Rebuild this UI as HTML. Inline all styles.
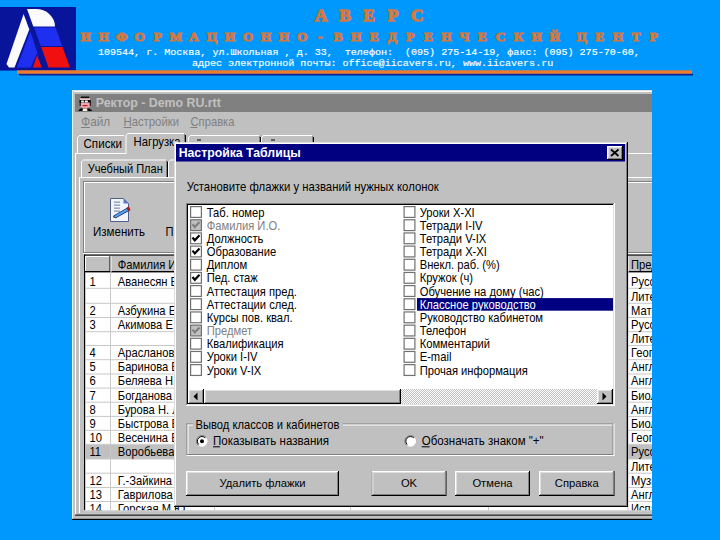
<!DOCTYPE html>
<html><head><meta charset="utf-8"><style>
html,body{margin:0;padding:0;background:#0098fc;}
svg{display:block;font-family:"Liberation Sans",sans-serif;}
</style></head><body>
<svg width="720" height="540" viewBox="0 0 720 540">
<defs><clipPath id="gridclip"><rect x="84" y="254" width="568" height="256.5"/></clipPath><pattern id="dither" width="2" height="2" patternUnits="userSpaceOnUse"><rect width="1" height="1" fill="#fff"/><rect x="1" y="1" width="1" height="1" fill="#fff"/><rect x="1" width="1" height="1" fill="#c0c0c0"/><rect y="1" width="1" height="1" fill="#c0c0c0"/></pattern></defs>
<rect x="0" y="0" width="720" height="540" fill="#0098fc" />
<rect x="0" y="7" width="76" height="63.6" fill="#08149a" />
<path d="M27,9 L36,9 A19,17.5 0 0 1 55,26.5 L33.3,26.5 Z" fill="#fbfbfb" />
<polygon points="34.1,27.6 55.6,27.6 62.2,46 40.7,46" fill="#1f2ff0" />
<polygon points="41.2,47 62.5,47 70,67.6 48.5,67.6" fill="#f01010" />
<polygon points="23.6,14 29.3,29.5 14.5,67.5 9,67.5 6.5,64" fill="#fbfbfb" />
<polygon points="30.3,31.5 33.2,39.5 41.8,67.6 16.8,67.6" fill="#1f2ff0" />
<polygon points="37,53.5 30.8,67.6 43,67.6" fill="#08149a" />
<polygon points="37,55.5 32.8,67.6 41.8,67.6" fill="#f01010" />
<rect x="19" y="73.5" width="674" height="2" fill="#10208a" />
<rect x="17" y="70.3" width="675" height="3.4" fill="#f07a2a" />
<text x="321.01" y="21.2" font-family="Liberation Serif" font-weight="bold" font-size="17.5" fill="#e47a3c" text-anchor="middle" stroke="#cf7844" stroke-width="1.3">А</text>
<text x="345.05" y="21.2" font-family="Liberation Serif" font-weight="bold" font-size="17.5" fill="#e47a3c" text-anchor="middle" stroke="#cf7844" stroke-width="1.3">В</text>
<text x="369.09" y="21.2" font-family="Liberation Serif" font-weight="bold" font-size="17.5" fill="#e47a3c" text-anchor="middle" stroke="#cf7844" stroke-width="1.3">Е</text>
<text x="393.13" y="21.2" font-family="Liberation Serif" font-weight="bold" font-size="17.5" fill="#e47a3c" text-anchor="middle" stroke="#cf7844" stroke-width="1.3">Р</text>
<text x="417.17" y="21.2" font-family="Liberation Serif" font-weight="bold" font-size="17.5" fill="#e47a3c" text-anchor="middle" stroke="#cf7844" stroke-width="1.3">С</text>
<text x="85.51" y="41.2" font-family="Liberation Serif" font-weight="bold" font-size="13.2" fill="#e47a3c" text-anchor="middle" stroke="#cf7844" stroke-width="1.15">И</text>
<text x="103.55" y="41.2" font-family="Liberation Serif" font-weight="bold" font-size="13.2" fill="#e47a3c" text-anchor="middle" stroke="#cf7844" stroke-width="1.15">Н</text>
<text x="121.60" y="41.2" font-family="Liberation Serif" font-weight="bold" font-size="13.2" fill="#e47a3c" text-anchor="middle" stroke="#cf7844" stroke-width="1.15">Ф</text>
<text x="139.64" y="41.2" font-family="Liberation Serif" font-weight="bold" font-size="13.2" fill="#e47a3c" text-anchor="middle" stroke="#cf7844" stroke-width="1.15">О</text>
<text x="157.69" y="41.2" font-family="Liberation Serif" font-weight="bold" font-size="13.2" fill="#e47a3c" text-anchor="middle" stroke="#cf7844" stroke-width="1.15">Р</text>
<text x="175.73" y="41.2" font-family="Liberation Serif" font-weight="bold" font-size="13.2" fill="#e47a3c" text-anchor="middle" stroke="#cf7844" stroke-width="1.15">М</text>
<text x="193.78" y="41.2" font-family="Liberation Serif" font-weight="bold" font-size="13.2" fill="#e47a3c" text-anchor="middle" stroke="#cf7844" stroke-width="1.15">А</text>
<text x="211.82" y="41.2" font-family="Liberation Serif" font-weight="bold" font-size="13.2" fill="#e47a3c" text-anchor="middle" stroke="#cf7844" stroke-width="1.15">Ц</text>
<text x="229.86" y="41.2" font-family="Liberation Serif" font-weight="bold" font-size="13.2" fill="#e47a3c" text-anchor="middle" stroke="#cf7844" stroke-width="1.15">И</text>
<text x="247.91" y="41.2" font-family="Liberation Serif" font-weight="bold" font-size="13.2" fill="#e47a3c" text-anchor="middle" stroke="#cf7844" stroke-width="1.15">О</text>
<text x="265.95" y="41.2" font-family="Liberation Serif" font-weight="bold" font-size="13.2" fill="#e47a3c" text-anchor="middle" stroke="#cf7844" stroke-width="1.15">Н</text>
<text x="284.00" y="41.2" font-family="Liberation Serif" font-weight="bold" font-size="13.2" fill="#e47a3c" text-anchor="middle" stroke="#cf7844" stroke-width="1.15">Н</text>
<text x="302.04" y="41.2" font-family="Liberation Serif" font-weight="bold" font-size="13.2" fill="#e47a3c" text-anchor="middle" stroke="#cf7844" stroke-width="1.15">О</text>
<text x="320.08" y="41.2" font-family="Liberation Serif" font-weight="bold" font-size="13.2" fill="#e47a3c" text-anchor="middle" stroke="#cf7844" stroke-width="1.15">-</text>
<text x="338.13" y="41.2" font-family="Liberation Serif" font-weight="bold" font-size="13.2" fill="#e47a3c" text-anchor="middle" stroke="#cf7844" stroke-width="1.15">В</text>
<text x="356.17" y="41.2" font-family="Liberation Serif" font-weight="bold" font-size="13.2" fill="#e47a3c" text-anchor="middle" stroke="#cf7844" stroke-width="1.15">Н</text>
<text x="374.22" y="41.2" font-family="Liberation Serif" font-weight="bold" font-size="13.2" fill="#e47a3c" text-anchor="middle" stroke="#cf7844" stroke-width="1.15">Е</text>
<text x="392.26" y="41.2" font-family="Liberation Serif" font-weight="bold" font-size="13.2" fill="#e47a3c" text-anchor="middle" stroke="#cf7844" stroke-width="1.15">Д</text>
<text x="410.30" y="41.2" font-family="Liberation Serif" font-weight="bold" font-size="13.2" fill="#e47a3c" text-anchor="middle" stroke="#cf7844" stroke-width="1.15">Р</text>
<text x="428.35" y="41.2" font-family="Liberation Serif" font-weight="bold" font-size="13.2" fill="#e47a3c" text-anchor="middle" stroke="#cf7844" stroke-width="1.15">Е</text>
<text x="446.39" y="41.2" font-family="Liberation Serif" font-weight="bold" font-size="13.2" fill="#e47a3c" text-anchor="middle" stroke="#cf7844" stroke-width="1.15">Н</text>
<text x="464.44" y="41.2" font-family="Liberation Serif" font-weight="bold" font-size="13.2" fill="#e47a3c" text-anchor="middle" stroke="#cf7844" stroke-width="1.15">Ч</text>
<text x="482.48" y="41.2" font-family="Liberation Serif" font-weight="bold" font-size="13.2" fill="#e47a3c" text-anchor="middle" stroke="#cf7844" stroke-width="1.15">Е</text>
<text x="500.52" y="41.2" font-family="Liberation Serif" font-weight="bold" font-size="13.2" fill="#e47a3c" text-anchor="middle" stroke="#cf7844" stroke-width="1.15">С</text>
<text x="518.57" y="41.2" font-family="Liberation Serif" font-weight="bold" font-size="13.2" fill="#e47a3c" text-anchor="middle" stroke="#cf7844" stroke-width="1.15">К</text>
<text x="536.61" y="41.2" font-family="Liberation Serif" font-weight="bold" font-size="13.2" fill="#e47a3c" text-anchor="middle" stroke="#cf7844" stroke-width="1.15">И</text>
<text x="554.65" y="41.2" font-family="Liberation Serif" font-weight="bold" font-size="13.2" fill="#e47a3c" text-anchor="middle" stroke="#cf7844" stroke-width="1.15">Й</text>
<text x="581.72" y="41.2" font-family="Liberation Serif" font-weight="bold" font-size="13.2" fill="#e47a3c" text-anchor="middle" stroke="#cf7844" stroke-width="1.15">Ц</text>
<text x="599.76" y="41.2" font-family="Liberation Serif" font-weight="bold" font-size="13.2" fill="#e47a3c" text-anchor="middle" stroke="#cf7844" stroke-width="1.15">Е</text>
<text x="617.81" y="41.2" font-family="Liberation Serif" font-weight="bold" font-size="13.2" fill="#e47a3c" text-anchor="middle" stroke="#cf7844" stroke-width="1.15">Н</text>
<text x="635.85" y="41.2" font-family="Liberation Serif" font-weight="bold" font-size="13.2" fill="#e47a3c" text-anchor="middle" stroke="#cf7844" stroke-width="1.15">Т</text>
<text x="653.90" y="41.2" font-family="Liberation Serif" font-weight="bold" font-size="13.2" fill="#e47a3c" text-anchor="middle" stroke="#cf7844" stroke-width="1.15">Р</text>
<text x="98" y="54.5" font-size="9.4" fill="#ffffff" font-family="Liberation Mono" textLength="541.8" lengthAdjust="spacingAndGlyphs" stroke="#ffffff" stroke-width="0.15" style="white-space:pre">109544, г. Москва, ул.Школьная , д. 33,  телефон:  (095) 275-14-19, факс: (095) 275-70-60,</text>
<text x="192" y="66.3" font-size="9.4" fill="#ffffff" font-family="Liberation Mono" textLength="361.2" lengthAdjust="spacingAndGlyphs" stroke="#ffffff" stroke-width="0.15" style="white-space:pre">адрес электронной почты: office@iicavers.ru, www.iicavers.ru</text>
<rect x="72" y="90" width="580" height="430" fill="#c0c0c0" />
<rect x="72" y="90" width="580" height="1" fill="#dfdfdf" />
<rect x="72" y="90" width="1" height="430" fill="#e6f4f8" />
<rect x="73" y="91" width="579" height="1" fill="#ffffff" />
<rect x="73" y="91" width="1" height="428" fill="#c0c0c0" />
<rect x="75" y="94" width="577" height="18" fill="#808080" />
<text x="95.8" y="100.187" transform="scale(1,1.07)" font-size="12.2" fill="#c0c0c0" font-weight="bold" textLength="125" lengthAdjust="spacingAndGlyphs"  style="white-space:pre">Ректор - Demo RU.rtt</text>
<rect x="81" y="96.5" width="8" height="2" fill="#101010" />
<rect x="80" y="97.5" width="10" height="3" fill="#e8c8c8" />
<rect x="80.5" y="97" width="9" height="1.2" fill="#101010" />
<rect x="79.5" y="100" width="11" height="2.6" fill="#000" />
<rect x="81.2" y="100.5" width="2.6" height="1.8" fill="#ffffff" />
<rect x="84.8" y="100.5" width="3" height="1.8" fill="#ffffff" />
<rect x="80.5" y="102.6" width="9.5" height="4.6" fill="#f0a8b4" />
<rect x="79.7" y="101" width="1" height="5" fill="#000" />
<rect x="89.7" y="101" width="1" height="5" fill="#000" />
<rect x="82.5" y="105" width="5" height="1.2" fill="#d01818" />
<rect x="82" y="107.2" width="6" height="1.2" fill="#f0a8b4" />
<polygon points="78,111 80.5,108.4 89.5,108.4 92.5,111" fill="#000" />
<polygon points="82.5,111 83,108.4 87,108.4 87.5,111" fill="#f8f0d8" />
<text x="81.2" y="117.570" transform="scale(1,1.07)" font-size="11.4" fill="#808080" textLength="29" lengthAdjust="spacingAndGlyphs"  style="white-space:pre">Файл</text>
<text x="123.5" y="117.570" transform="scale(1,1.07)" font-size="11.4" fill="#808080" textLength="55.5" lengthAdjust="spacingAndGlyphs"  style="white-space:pre">Настройки</text>
<text x="190.5" y="117.570" transform="scale(1,1.07)" font-size="11.4" fill="#808080" textLength="44" lengthAdjust="spacingAndGlyphs"  style="white-space:pre">Справка</text>
<rect x="81" y="127" width="9" height="1" fill="#808080" />
<rect x="123.5" y="127" width="8" height="1" fill="#808080" />
<rect x="190.5" y="127" width="7" height="1" fill="#808080" />
<rect x="75" y="153" width="577" height="1" fill="#ffffff" />
<rect x="75" y="153" width="1" height="363" fill="#ffffff" />
<rect x="77" y="137" width="1" height="16" fill="#fff" />
<rect x="79" y="135" width="45" height="1" fill="#fff" />
<rect x="78" y="136" width="1" height="1" fill="#fff" />
<rect x="125.5" y="133" width="60.5" height="21" fill="#c0c0c0" />
<rect x="125.5" y="135" width="1" height="19" fill="#fff" />
<rect x="127.5" y="133" width="56.5" height="1" fill="#fff" />
<rect x="126.5" y="134" width="1" height="1" fill="#fff" />
<rect x="185.0" y="135" width="1" height="19" fill="#000" />
<rect x="184.0" y="134" width="1" height="20" fill="#808080" />
<text x="83.5" y="138.598" transform="scale(1,1.07)" font-size="11.5" fill="#000" textLength="38.5" lengthAdjust="spacingAndGlyphs"  style="white-space:pre">Списки</text>
<text x="133.6" y="136.822" transform="scale(1,1.07)" font-size="11.5" fill="#000" textLength="47" lengthAdjust="spacingAndGlyphs"  style="white-space:pre">Нагрузка</text>
<rect x="188" y="137" width="1" height="16" fill="#fff" />
<rect x="190" y="135" width="69" height="1" fill="#fff" />
<rect x="189" y="136" width="1" height="1" fill="#fff" />
<rect x="260" y="137" width="1" height="16" fill="#000" />
<rect x="259" y="136" width="1" height="17" fill="#808080" />
<rect x="261" y="137" width="1" height="16" fill="#fff" />
<rect x="263" y="135" width="49" height="1" fill="#fff" />
<rect x="262" y="136" width="1" height="1" fill="#fff" />
<rect x="313" y="137" width="1" height="16" fill="#000" />
<rect x="312" y="136" width="1" height="17" fill="#808080" />
<rect x="197" y="139.5" width="4" height="1" fill="#000" />
<rect x="271" y="139.5" width="4" height="1" fill="#000" />
<rect x="79" y="177" width="573" height="1" fill="#ffffff" />
<rect x="79" y="177" width="1" height="336" fill="#ffffff" />
<rect x="81" y="161.5" width="1" height="15.5" fill="#fff" />
<rect x="83" y="159.5" width="83" height="1" fill="#fff" />
<rect x="82" y="160.5" width="1" height="1" fill="#fff" />
<rect x="167" y="161.5" width="1" height="15.5" fill="#000" />
<rect x="166" y="160.5" width="1" height="16.5" fill="#808080" />
<text x="87.8" y="161.495" transform="scale(1,1.07)" font-size="11.2" fill="#000" textLength="75" lengthAdjust="spacingAndGlyphs"  style="white-space:pre">Учебный План</text>
<rect x="168" y="161.5" width="1" height="15.5" fill="#fff" />
<rect x="170" y="159.5" width="36" height="1" fill="#fff" />
<rect x="169" y="160.5" width="1" height="1" fill="#fff" />
<rect x="207" y="161.5" width="1" height="15.5" fill="#000" />
<rect x="206" y="160.5" width="1" height="16.5" fill="#808080" />
<rect x="83" y="181" width="569" height="1" fill="#808080" />
<rect x="83" y="182" width="569" height="1" fill="#ffffff" />
<rect x="83" y="181" width="1" height="72" fill="#808080" />
<rect x="84" y="182" width="1" height="71" fill="#ffffff" />
<rect x="83" y="252" width="569" height="1" fill="#808080" />
<rect x="83" y="253" width="569" height="1" fill="#ffffff" />
<text x="93" y="221.028" transform="scale(1,1.07)" font-size="11.2" fill="#000" textLength="52" lengthAdjust="spacingAndGlyphs"  style="white-space:pre">Изменить</text>
<text x="165.5" y="221.028" transform="scale(1,1.07)" font-size="11.2" fill="#000"  style="white-space:pre">П</text>
<polygon points="110.5,198.5 123.5,198.5 128.5,203.5 128.5,221.5 110.5,221.5" fill="#f0f4ff" stroke="#50608a" stroke-width="1"/>
<polygon points="123.5,198.5 123.5,203.5 128.5,203.5" fill="#5a7ad0" />
<rect x="114.0" y="201.5" width="6" height="1.3" fill="#8898b8" />
<rect x="114.0" y="204.5" width="6" height="1.3" fill="#8898b8" />
<rect x="114.0" y="207.5" width="6" height="1.3" fill="#8898b8" />
<rect x="114.0" y="210.5" width="6" height="1.3" fill="#8898b8" />
<polygon points="113.5,216.0 127.0,208.3 128.7,210.7 115.3,218.0" fill="#58a8f0" stroke="#1a2a70" stroke-width="0.9"/>
<polygon points="113.1,216.1 115.1,217.9 113.7,217.7" fill="#202020" />
<polygon points="126.5,207.5 129.0,206.5 130.5,210.0 128.5,211.5" fill="#b01818" />
<g clip-path="url(#gridclip)">
<rect x="84" y="254.5" width="568" height="256" fill="#ffffff" />
<rect x="84" y="254.5" width="568" height="1.2" fill="#000" />
<rect x="84" y="254.5" width="1.2" height="256" fill="#000" />
<rect x="85" y="256" width="567" height="16" fill="#c0c0c0" />
<rect x="85" y="256" width="25" height="1" fill="#fff" />
<rect x="85" y="256" width="1" height="16" fill="#fff" />
<rect x="109.5" y="256" width="1" height="16" fill="#000" />
<rect x="85" y="271" width="567" height="1.4" fill="#000" />
<rect x="110.5" y="256" width="1" height="16" fill="#fff" />
<text x="117.8" y="251.589" transform="scale(1,1.07)" font-size="11.2" fill="#000"  style="white-space:pre">Фамилия И.О.</text>
<rect x="85" y="287.8" width="567" height="1" fill="#c8c8c8" />
<text x="89.5" y="267.009" transform="scale(1,1.07)" font-size="11.2" fill="#000"  style="white-space:pre">1</text>
<text x="117.8" y="267.009" transform="scale(1,1.07)" font-size="11.2" fill="#000"  style="white-space:pre">Аванесян В.</text>
<text x="631" y="267.009" transform="scale(1,1.07)" font-size="11.2" fill="#000"  style="white-space:pre">Русский</text>
<rect x="85" y="302.8" width="567" height="1" fill="#c8c8c8" />
<text x="631" y="281.028" transform="scale(1,1.07)" font-size="11.2" fill="#000"  style="white-space:pre">Литература</text>
<rect x="85" y="317.0" width="567" height="1" fill="#c8c8c8" />
<text x="89.5" y="294.299" transform="scale(1,1.07)" font-size="11.2" fill="#000"  style="white-space:pre">2</text>
<text x="117.8" y="294.299" transform="scale(1,1.07)" font-size="11.2" fill="#000"  style="white-space:pre">Азбукина Е.</text>
<text x="631" y="294.299" transform="scale(1,1.07)" font-size="11.2" fill="#000"  style="white-space:pre">Математика</text>
<rect x="85" y="331.2" width="567" height="1" fill="#c8c8c8" />
<text x="89.5" y="307.570" transform="scale(1,1.07)" font-size="11.2" fill="#000"  style="white-space:pre">3</text>
<text x="117.8" y="307.570" transform="scale(1,1.07)" font-size="11.2" fill="#000"  style="white-space:pre">Акимова Е.</text>
<text x="631" y="307.570" transform="scale(1,1.07)" font-size="11.2" fill="#000"  style="white-space:pre">Русский</text>
<rect x="85" y="345.0" width="567" height="1" fill="#c8c8c8" />
<text x="631" y="320.467" transform="scale(1,1.07)" font-size="11.2" fill="#000"  style="white-space:pre">Литература</text>
<rect x="85" y="359.2" width="567" height="1" fill="#c8c8c8" />
<text x="89.5" y="333.738" transform="scale(1,1.07)" font-size="11.2" fill="#000"  style="white-space:pre">4</text>
<text x="117.8" y="333.738" transform="scale(1,1.07)" font-size="11.2" fill="#000"  style="white-space:pre">Арасланов И.</text>
<text x="631" y="333.738" transform="scale(1,1.07)" font-size="11.2" fill="#000"  style="white-space:pre">География</text>
<rect x="85" y="373.5" width="567" height="1" fill="#c8c8c8" />
<text x="89.5" y="347.103" transform="scale(1,1.07)" font-size="11.2" fill="#000"  style="white-space:pre">5</text>
<text x="117.8" y="347.103" transform="scale(1,1.07)" font-size="11.2" fill="#000"  style="white-space:pre">Баринова В.</text>
<text x="631" y="347.103" transform="scale(1,1.07)" font-size="11.2" fill="#000"  style="white-space:pre">Английский</text>
<rect x="85" y="387.6" width="567" height="1" fill="#c8c8c8" />
<text x="89.5" y="360.280" transform="scale(1,1.07)" font-size="11.2" fill="#000"  style="white-space:pre">6</text>
<text x="117.8" y="360.280" transform="scale(1,1.07)" font-size="11.2" fill="#000"  style="white-space:pre">Беляева Н.</text>
<text x="631" y="360.280" transform="scale(1,1.07)" font-size="11.2" fill="#000"  style="white-space:pre">Английский</text>
<rect x="85" y="401.7" width="567" height="1" fill="#c8c8c8" />
<text x="89.5" y="373.458" transform="scale(1,1.07)" font-size="11.2" fill="#000"  style="white-space:pre">7</text>
<text x="117.8" y="373.458" transform="scale(1,1.07)" font-size="11.2" fill="#000"  style="white-space:pre">Богданова</text>
<text x="631" y="373.458" transform="scale(1,1.07)" font-size="11.2" fill="#000"  style="white-space:pre">Биология</text>
<rect x="85" y="415.9" width="567" height="1" fill="#c8c8c8" />
<text x="89.5" y="386.729" transform="scale(1,1.07)" font-size="11.2" fill="#000"  style="white-space:pre">8</text>
<text x="117.8" y="386.729" transform="scale(1,1.07)" font-size="11.2" fill="#000"  style="white-space:pre">Бурова Н. Л.</text>
<text x="631" y="386.729" transform="scale(1,1.07)" font-size="11.2" fill="#000"  style="white-space:pre">Английский</text>
<rect x="85" y="429.8" width="567" height="1" fill="#c8c8c8" />
<text x="89.5" y="399.720" transform="scale(1,1.07)" font-size="11.2" fill="#000"  style="white-space:pre">9</text>
<text x="117.8" y="399.720" transform="scale(1,1.07)" font-size="11.2" fill="#000"  style="white-space:pre">Быстрова Е.</text>
<text x="631" y="399.720" transform="scale(1,1.07)" font-size="11.2" fill="#000"  style="white-space:pre">Биология</text>
<rect x="85" y="443.8" width="567" height="1" fill="#c8c8c8" />
<text x="89.5" y="412.804" transform="scale(1,1.07)" font-size="11.2" fill="#000"  style="white-space:pre">10</text>
<text x="117.8" y="412.804" transform="scale(1,1.07)" font-size="11.2" fill="#000"  style="white-space:pre">Весенина В.</text>
<text x="631" y="412.804" transform="scale(1,1.07)" font-size="11.2" fill="#000"  style="white-space:pre">География</text>
<rect x="85" y="444.8" width="567" height="14.199999999999989" fill="#c0c0c0" />
<rect x="85" y="458.5" width="567" height="1" fill="#c8c8c8" />
<text x="89.5" y="426.542" transform="scale(1,1.07)" font-size="11.2" fill="#000"  style="white-space:pre">11</text>
<text x="117.8" y="426.542" transform="scale(1,1.07)" font-size="11.2" fill="#000"  style="white-space:pre">Воробьева</text>
<text x="631" y="426.542" transform="scale(1,1.07)" font-size="11.2" fill="#000"  style="white-space:pre">Русский</text>
<rect x="85" y="472.7" width="567" height="1" fill="#c8c8c8" />
<text x="631" y="439.813" transform="scale(1,1.07)" font-size="11.2" fill="#000"  style="white-space:pre">Литература</text>
<rect x="85" y="487.0" width="567" height="1" fill="#c8c8c8" />
<text x="89.5" y="453.178" transform="scale(1,1.07)" font-size="11.2" fill="#000"  style="white-space:pre">12</text>
<text x="117.8" y="453.178" transform="scale(1,1.07)" font-size="11.2" fill="#000"  style="white-space:pre">Г.-Зайкина</text>
<text x="631" y="453.178" transform="scale(1,1.07)" font-size="11.2" fill="#000"  style="white-space:pre">Музыка</text>
<rect x="85" y="501.0" width="567" height="1" fill="#c8c8c8" />
<text x="89.5" y="466.262" transform="scale(1,1.07)" font-size="11.2" fill="#000"  style="white-space:pre">13</text>
<text x="117.8" y="466.262" transform="scale(1,1.07)" font-size="11.2" fill="#000"  style="white-space:pre">Гаврилова</text>
<text x="631" y="466.262" transform="scale(1,1.07)" font-size="11.2" fill="#000"  style="white-space:pre">Английский</text>
<rect x="85" y="515.1" width="567" height="1" fill="#c8c8c8" />
<text x="89.5" y="479.439" transform="scale(1,1.07)" font-size="11.2" fill="#000"  style="white-space:pre">14</text>
<text x="117.8" y="479.439" transform="scale(1,1.07)" font-size="11.2" fill="#000"  style="white-space:pre">Горская М.Ю.</text>
<text x="631" y="479.439" transform="scale(1,1.07)" font-size="11.2" fill="#000"  style="white-space:pre">Испанский</text>
<rect x="110" y="272" width="1" height="240" fill="#c8c8c8" />
<rect x="627.5" y="256" width="1" height="254" fill="#c8c8c8" />
<rect x="214" y="505" width="1" height="6" fill="#c8c8c8" />
<rect x="350" y="505" width="1" height="6" fill="#c8c8c8" />
<rect x="488" y="505" width="1" height="6" fill="#c8c8c8" />
<text x="631" y="251.589" transform="scale(1,1.07)" font-size="11.2" fill="#000"  style="white-space:pre">Предмет</text>
<rect x="626.5" y="256" width="1" height="16" fill="#000" />
<rect x="627.5" y="256" width="1" height="16" fill="#fff" />
</g>
<rect x="84" y="510.5" width="568" height="1" fill="#e0e0e0" />
<rect x="84" y="511.5" width="568" height="1.5" fill="#c0c0c0" />
<rect x="79" y="513" width="573" height="1.6" fill="#c8c8c8" />
<rect x="75" y="514.6" width="577" height="1.3" fill="#000" />
<rect x="73" y="515.7" width="579" height="3.1" fill="#c0c0c0" />
<rect x="72" y="518.8" width="580" height="1.2" fill="#000" />
<rect x="652" y="80" width="68" height="460" fill="#0098fc" />
<rect x="174" y="142" width="454" height="365" fill="#000" />
<rect x="174" y="142" width="453" height="364" fill="#dfdfdf" />
<rect x="175" y="143" width="452" height="363" fill="#808080" />
<rect x="175" y="143" width="451" height="362" fill="#ffffff" />
<rect x="176" y="144" width="450" height="361" fill="#c0c0c0" />
<rect x="176" y="144" width="449" height="17.5" fill="#000080" />
<text x="178.7" y="146.729" transform="scale(1,1.07)" font-size="12.2" fill="#fff" font-weight="bold" textLength="122" lengthAdjust="spacingAndGlyphs"  style="white-space:pre">Настройка Таблицы</text>
<rect x="607" y="146" width="16" height="14" fill="#000" />
<rect x="607" y="146" width="15" height="13" fill="#fff" />
<rect x="608" y="147" width="14" height="12" fill="#808080" />
<rect x="608" y="147" width="13" height="11" fill="#dfdfdf" />
<rect x="609" y="148" width="12" height="10" fill="#c0c0c0" />
<path d="M611,149.5 L618.5,156 M618.5,149.5 L611,156" fill="none" stroke="#000" stroke-width="1.7"/>
<text x="186.7" y="178.972" transform="scale(1,1.07)" font-size="11.3" fill="#000" textLength="252" lengthAdjust="spacingAndGlyphs"  style="white-space:pre">Установите флажки у названий нужных колонок</text>
<rect x="186" y="203" width="429" height="203" fill="#fff" />
<rect x="186" y="203" width="428" height="202" fill="#808080" />
<rect x="187" y="204" width="427" height="201" fill="#dfdfdf" />
<rect x="187" y="204" width="426" height="200" fill="#000" />
<rect x="188" y="205" width="425" height="199" fill="#fff" />
<rect x="190.0" y="206.0" width="12" height="12" fill="#707070" />
<rect x="191.2" y="207.20000000000002" width="9.6" height="9.6" fill="#fff" />
<text x="206.8" y="202.430" transform="scale(1,1.07)" font-size="11.2" fill="#000"  style="white-space:pre">Таб. номер</text>
<rect x="190.0" y="219.17" width="12" height="12" fill="#707070" />
<rect x="191.2" y="220.37" width="9.6" height="9.6" fill="#c0c0c0" />
<path d="M192.5,224.27 L194.8,227.07 L199.5,222.07" fill="none" stroke="#808080" stroke-width="2.2"/>
<text x="206.8" y="214.738" transform="scale(1,1.07)" font-size="11.2" fill="#808080"  style="white-space:pre">Фамилия И.О.</text>
<rect x="190.0" y="232.34" width="12" height="12" fill="#707070" />
<rect x="191.2" y="233.54000000000002" width="9.6" height="9.6" fill="#fff" />
<path d="M192.5,237.44000000000003 L194.8,240.24 L199.5,235.24" fill="none" stroke="#000" stroke-width="2.2"/>
<text x="206.8" y="227.047" transform="scale(1,1.07)" font-size="11.2" fill="#000"  style="white-space:pre">Должность</text>
<rect x="190.0" y="245.51" width="12" height="12" fill="#707070" />
<rect x="191.2" y="246.71" width="9.6" height="9.6" fill="#fff" />
<path d="M192.5,250.61 L194.8,253.41 L199.5,248.41" fill="none" stroke="#000" stroke-width="2.2"/>
<text x="206.8" y="239.355" transform="scale(1,1.07)" font-size="11.2" fill="#000"  style="white-space:pre">Образование</text>
<rect x="190.0" y="258.68" width="12" height="12" fill="#707070" />
<rect x="191.2" y="259.88" width="9.6" height="9.6" fill="#fff" />
<text x="206.8" y="251.664" transform="scale(1,1.07)" font-size="11.2" fill="#000"  style="white-space:pre">Диплом</text>
<rect x="190.0" y="271.84999999999997" width="12" height="12" fill="#707070" />
<rect x="191.2" y="273.04999999999995" width="9.6" height="9.6" fill="#fff" />
<path d="M192.5,276.95 L194.8,279.75 L199.5,274.75" fill="none" stroke="#000" stroke-width="2.2"/>
<text x="206.8" y="263.972" transform="scale(1,1.07)" font-size="11.2" fill="#000"  style="white-space:pre">Пед. стаж</text>
<rect x="190.0" y="285.02" width="12" height="12" fill="#707070" />
<rect x="191.2" y="286.21999999999997" width="9.6" height="9.6" fill="#fff" />
<text x="206.8" y="276.280" transform="scale(1,1.07)" font-size="11.2" fill="#000"  style="white-space:pre">Аттестация пред.</text>
<rect x="190.0" y="298.19" width="12" height="12" fill="#707070" />
<rect x="191.2" y="299.39" width="9.6" height="9.6" fill="#fff" />
<text x="206.8" y="288.589" transform="scale(1,1.07)" font-size="11.2" fill="#000"  style="white-space:pre">Аттестации след.</text>
<rect x="190.0" y="311.36" width="12" height="12" fill="#707070" />
<rect x="191.2" y="312.56" width="9.6" height="9.6" fill="#fff" />
<text x="206.8" y="300.897" transform="scale(1,1.07)" font-size="11.2" fill="#000"  style="white-space:pre">Курсы пов. квал.</text>
<rect x="190.0" y="324.53000000000003" width="12" height="12" fill="#707070" />
<rect x="191.2" y="325.73" width="9.6" height="9.6" fill="#c0c0c0" />
<path d="M192.5,329.63000000000005 L194.8,332.43000000000006 L199.5,327.43000000000006" fill="none" stroke="#808080" stroke-width="2.2"/>
<text x="206.8" y="313.206" transform="scale(1,1.07)" font-size="11.2" fill="#808080"  style="white-space:pre">Предмет</text>
<rect x="190.0" y="337.7" width="12" height="12" fill="#707070" />
<rect x="191.2" y="338.9" width="9.6" height="9.6" fill="#fff" />
<text x="206.8" y="325.514" transform="scale(1,1.07)" font-size="11.2" fill="#000"  style="white-space:pre">Квалификация</text>
<rect x="190.0" y="350.87" width="12" height="12" fill="#707070" />
<rect x="191.2" y="352.07" width="9.6" height="9.6" fill="#fff" />
<text x="206.8" y="337.822" transform="scale(1,1.07)" font-size="11.2" fill="#000"  style="white-space:pre">Уроки I-IV</text>
<rect x="190.0" y="364.04" width="12" height="12" fill="#707070" />
<rect x="191.2" y="365.24" width="9.6" height="9.6" fill="#fff" />
<text x="206.8" y="350.131" transform="scale(1,1.07)" font-size="11.2" fill="#000"  style="white-space:pre">Уроки V-IX</text>
<rect x="403.5" y="206.0" width="12" height="12" fill="#707070" />
<rect x="404.7" y="207.20000000000002" width="9.6" height="9.6" fill="#fff" />
<text x="419.7" y="202.430" transform="scale(1,1.07)" font-size="11.2" fill="#000"  style="white-space:pre">Уроки X-XI</text>
<rect x="403.5" y="219.17" width="12" height="12" fill="#707070" />
<rect x="404.7" y="220.37" width="9.6" height="9.6" fill="#fff" />
<text x="419.7" y="214.738" transform="scale(1,1.07)" font-size="11.2" fill="#000"  style="white-space:pre">Тетради I-IV</text>
<rect x="403.5" y="232.34" width="12" height="12" fill="#707070" />
<rect x="404.7" y="233.54000000000002" width="9.6" height="9.6" fill="#fff" />
<text x="419.7" y="227.047" transform="scale(1,1.07)" font-size="11.2" fill="#000"  style="white-space:pre">Тетради V-IX</text>
<rect x="403.5" y="245.51" width="12" height="12" fill="#707070" />
<rect x="404.7" y="246.71" width="9.6" height="9.6" fill="#fff" />
<text x="419.7" y="239.355" transform="scale(1,1.07)" font-size="11.2" fill="#000"  style="white-space:pre">Тетради X-XI</text>
<rect x="403.5" y="258.68" width="12" height="12" fill="#707070" />
<rect x="404.7" y="259.88" width="9.6" height="9.6" fill="#fff" />
<text x="419.7" y="251.664" transform="scale(1,1.07)" font-size="11.2" fill="#000"  style="white-space:pre">Внекл. раб. (%)</text>
<rect x="403.5" y="271.84999999999997" width="12" height="12" fill="#707070" />
<rect x="404.7" y="273.04999999999995" width="9.6" height="9.6" fill="#fff" />
<text x="419.7" y="263.972" transform="scale(1,1.07)" font-size="11.2" fill="#000"  style="white-space:pre">Кружок (ч)</text>
<rect x="403.5" y="285.02" width="12" height="12" fill="#707070" />
<rect x="404.7" y="286.21999999999997" width="9.6" height="9.6" fill="#fff" />
<text x="419.7" y="276.280" transform="scale(1,1.07)" font-size="11.2" fill="#000"  style="white-space:pre">Обучение на дому (час)</text>
<rect x="403.5" y="298.19" width="12" height="12" fill="#707070" />
<rect x="404.7" y="299.39" width="9.6" height="9.6" fill="#fff" />
<rect x="417" y="298.09000000000003" width="196" height="12.6" fill="#000080" />
<text x="419.7" y="288.589" transform="scale(1,1.07)" font-size="11.2" fill="#fff"  style="white-space:pre">Классное руководство</text>
<rect x="403.5" y="311.36" width="12" height="12" fill="#707070" />
<rect x="404.7" y="312.56" width="9.6" height="9.6" fill="#fff" />
<text x="419.7" y="300.897" transform="scale(1,1.07)" font-size="11.2" fill="#000"  style="white-space:pre">Руководство кабинетом</text>
<rect x="403.5" y="324.53000000000003" width="12" height="12" fill="#707070" />
<rect x="404.7" y="325.73" width="9.6" height="9.6" fill="#fff" />
<text x="419.7" y="313.206" transform="scale(1,1.07)" font-size="11.2" fill="#000"  style="white-space:pre">Телефон</text>
<rect x="403.5" y="337.7" width="12" height="12" fill="#707070" />
<rect x="404.7" y="338.9" width="9.6" height="9.6" fill="#fff" />
<text x="419.7" y="325.514" transform="scale(1,1.07)" font-size="11.2" fill="#000"  style="white-space:pre">Комментарий</text>
<rect x="403.5" y="350.87" width="12" height="12" fill="#707070" />
<rect x="404.7" y="352.07" width="9.6" height="9.6" fill="#fff" />
<text x="419.7" y="337.822" transform="scale(1,1.07)" font-size="11.2" fill="#000"  style="white-space:pre">E-mail</text>
<rect x="403.5" y="364.04" width="12" height="12" fill="#707070" />
<rect x="404.7" y="365.24" width="9.6" height="9.6" fill="#fff" />
<text x="419.7" y="350.131" transform="scale(1,1.07)" font-size="11.2" fill="#000"  style="white-space:pre">Прочая информация</text>
<rect x="188" y="389" width="425" height="15" fill="#d8d8d8" />
<rect x="188" y="389" width="425" height="15" fill="url(#dither)"/>
<rect x="188" y="389" width="16" height="15" fill="#000" />
<rect x="188" y="389" width="15" height="14" fill="#fff" />
<rect x="189" y="390" width="14" height="13" fill="#808080" />
<rect x="189" y="390" width="13" height="12" fill="#dfdfdf" />
<rect x="190" y="391" width="12" height="11" fill="#c0c0c0" />
<rect x="204" y="389" width="197" height="15" fill="#000" />
<rect x="204" y="389" width="196" height="14" fill="#fff" />
<rect x="205" y="390" width="195" height="13" fill="#808080" />
<rect x="205" y="390" width="194" height="12" fill="#dfdfdf" />
<rect x="206" y="391" width="193" height="11" fill="#c0c0c0" />
<polygon points="193.5,396.5 197.5,392.5 197.5,400.5" fill="#000" />
<rect x="597" y="389" width="16" height="15" fill="#000" />
<rect x="597" y="389" width="15" height="14" fill="#fff" />
<rect x="598" y="390" width="14" height="13" fill="#808080" />
<rect x="598" y="390" width="13" height="12" fill="#dfdfdf" />
<rect x="599" y="391" width="12" height="11" fill="#c0c0c0" />
<polygon points="606.5,396.5 602.5,392.5 602.5,400.5" fill="#000" />
<rect x="186.5" y="423.5" width="427" height="1" fill="#808080" />
<rect x="187.5" y="424.5" width="426" height="1" fill="#fff" />
<rect x="186.5" y="423.5" width="1" height="31" fill="#808080" />
<rect x="187.5" y="424.5" width="1" height="30" fill="#fff" />
<rect x="186.5" y="454" width="427" height="1" fill="#808080" />
<rect x="186.5" y="455" width="428" height="1" fill="#fff" />
<rect x="612.5" y="423.5" width="1" height="31" fill="#808080" />
<rect x="613.5" y="423.5" width="1" height="32" fill="#fff" />
<rect x="193" y="418" width="150" height="10" fill="#c0c0c0" />
<text x="195.5" y="400.841" transform="scale(1,1.07)" font-size="11.2" fill="#000" textLength="144" lengthAdjust="spacingAndGlyphs"  style="white-space:pre">Вывод классов и кабинетов</text>
<circle cx="202" cy="441.2" r="5.5" fill="#fff"/>
<path d="M198,445.2 A5.5,5.5 0 0 1 206,437.2" fill="none" stroke="#808080" stroke-width="1"/>
<path d="M198.7,444.5 A4.5,4.5 0 0 1 205.3,437.9" fill="none" stroke="#000" stroke-width="1"/>
<circle cx="202" cy="441.2" r="2" fill="#000"/>
<text x="213" y="415.981" transform="scale(1,1.07)" font-size="11.2" fill="#000" textLength="116" lengthAdjust="spacingAndGlyphs"  style="white-space:pre">Показывать названия</text>
<rect x="213" y="446.3" width="7" height="1" fill="#000" />
<circle cx="410.5" cy="441.2" r="5.5" fill="#fff"/>
<path d="M406.5,445.2 A5.5,5.5 0 0 1 414.5,437.2" fill="none" stroke="#808080" stroke-width="1"/>
<path d="M407.2,444.5 A4.5,4.5 0 0 1 413.8,437.9" fill="none" stroke="#000" stroke-width="1"/>
<text x="421.7" y="415.981" transform="scale(1,1.07)" font-size="11.2" fill="#000" textLength="122" lengthAdjust="spacingAndGlyphs"  style="white-space:pre">Обозначать знаком &quot;+&quot;</text>
<rect x="421.7" y="446.3" width="8" height="1" fill="#000" />
<rect x="186" y="471" width="153" height="25" fill="#000" />
<rect x="186" y="471" width="152" height="24" fill="#fff" />
<rect x="187" y="472" width="151" height="23" fill="#808080" />
<rect x="187" y="472" width="150" height="22" fill="#dfdfdf" />
<rect x="188" y="473" width="149" height="21" fill="#c0c0c0" />
<text x="262.5" y="486.7" font-size="11.2" text-anchor="middle">Удалить флажки</text>
<rect x="371.5" y="471" width="75" height="25" fill="#000" />
<rect x="371.5" y="471" width="74" height="24" fill="#fff" />
<rect x="372.5" y="472" width="73" height="23" fill="#808080" />
<rect x="372.5" y="472" width="72" height="22" fill="#dfdfdf" />
<rect x="373.5" y="473" width="71" height="21" fill="#c0c0c0" />
<text x="409.0" y="486.7" font-size="11.2" text-anchor="middle">OK</text>
<rect x="455" y="471" width="75" height="25" fill="#000" />
<rect x="455" y="471" width="74" height="24" fill="#fff" />
<rect x="456" y="472" width="73" height="23" fill="#808080" />
<rect x="456" y="472" width="72" height="22" fill="#dfdfdf" />
<rect x="457" y="473" width="71" height="21" fill="#c0c0c0" />
<text x="492.5" y="486.7" font-size="11.2" text-anchor="middle">Отмена</text>
<rect x="539" y="471" width="75.5" height="25" fill="#000" />
<rect x="539" y="471" width="74.5" height="24" fill="#fff" />
<rect x="540" y="472" width="73.5" height="23" fill="#808080" />
<rect x="540" y="472" width="72.5" height="22" fill="#dfdfdf" />
<rect x="541" y="473" width="71.5" height="21" fill="#c0c0c0" />
<text x="576.75" y="486.7" font-size="11.2" text-anchor="middle">Справка</text>
</svg></body></html>
